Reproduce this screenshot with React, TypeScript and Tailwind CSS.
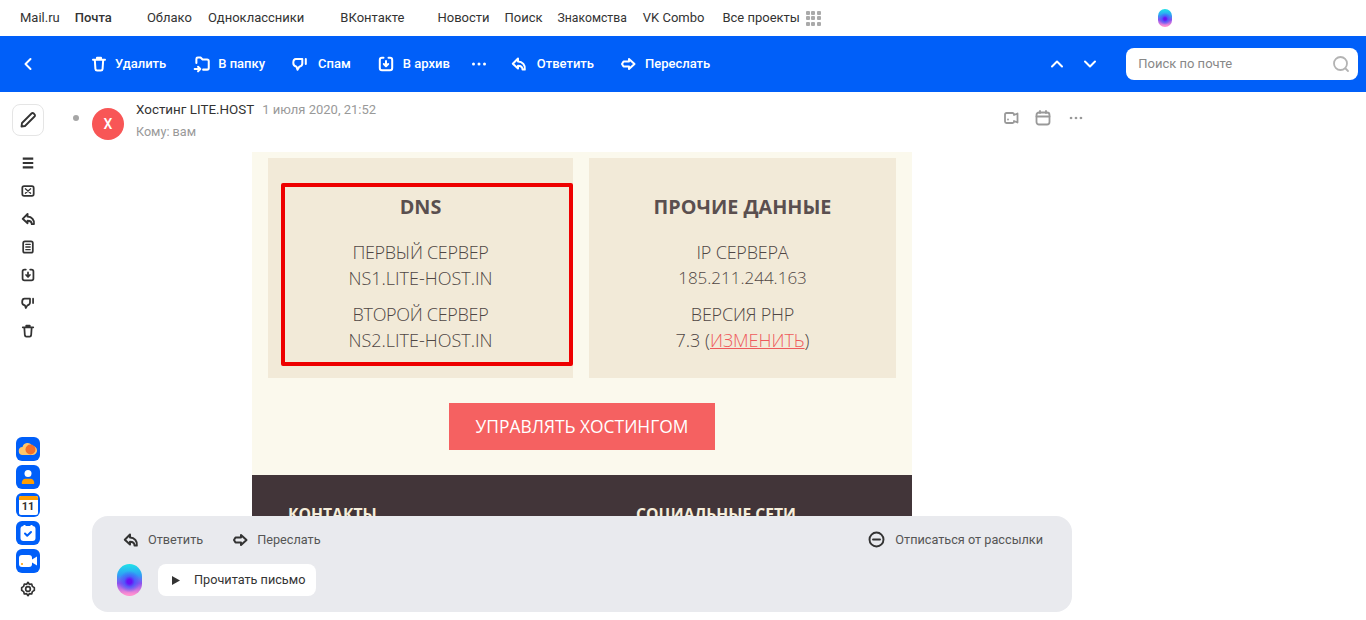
import type { ReactNode } from 'react'

const ui = { fontFamily: 'Roboto, "Liberation Sans", sans-serif' }

type IconProps = { className?: string; size?: number }

function Svg({ size = 16, className = '', children }: IconProps & { children: ReactNode }) {
  return (
    <svg
      width={size}
      height={size}
      viewBox="0 0 16 16"
      fill="none"
      stroke="currentColor"
      strokeWidth="2"
      strokeLinecap="round"
      strokeLinejoin="round"
      className={`shrink-0 ${className}`}
    >
      {children}
    </svg>
  )
}

const ReplyIcon = ({ className = '', size = 16 }: IconProps) => (
  <Svg size={size} className={className}>
    <path d="M7 2.500 1.800 7.800 7 12.500V9.800c2.500 0 4.500.7 4.500 3.700h2.300C14.500 9 11.500 5.500 7 5.500z" />
  </Svg>
)
const ForwardIcon = ({ className = '', size = 16 }: IconProps) => (
  <Svg size={size} className={className}>
    <path d="M9 3l5.500 5L9 13v-2.500H3.500L2 8l1.500-2.500H9z" />
  </Svg>
)
const TrashIcon = ({ className = '', size = 16 }: IconProps) => (
  <Svg size={size} className={className}>
    <path d="M2 3.800h12M6 3.800V1.800h4v2M3.800 3.800l.6 9c.1 1 .7 1.700 1.700 1.700h3.800c1 0 1.600-.7 1.700-1.700l.6-9" />
  </Svg>
)
const FolderIcon = ({ className = '', size = 18 }: IconProps) => (
  <Svg size={size} className={className}>
    <path d="M3 7V3.500c0-.8.5-1.300 1.300-1.300h2.400L8.500 4h4c1 0 1.500.5 1.500 1.500v6c0 1-.5 1.500-1.500 1.500H9M1.500 12.500h4.500M4.500 10.500l2 2-2 2" strokeWidth="1.800" />
  </Svg>
)
const SpamIcon = ({ className = '', size = 16 }: IconProps) => (
  <Svg size={size} className={className}>
    <path d="M4 3h6.300v4.500c0 1.800-1.300 2.800-3 3.200L5.500 13.800 4.500 10.700C2.500 10.200 1.300 8.800 1.300 7c0-2.500 1.200-4 2.700-4zM13.800 3v5" />
  </Svg>
)
const ArchiveIcon = ({ className = '', size = 16 }: IconProps) => (
  <Svg size={size} className={className}>
    <path d="M5.500 1.800H4C2.700 1.800 1.800 2.700 1.800 4v8c0 1.300.9 2.200 2.200 2.200h8c1.300 0 2.200-.9 2.200-2.200V4c0-1.300-.9-2.200-2.200-2.200h-1.500" />
    <path d="M8 5v5M5.800 8 8 10.300 10.200 8" />
  </Svg>
)
const DotsIcon = ({ className = '' }: { className?: string }) => (
  <svg width="16" height="4" viewBox="0 0 16 4" fill="currentColor" className={`shrink-0 ${className}`}>
    <circle cx="2.500" cy="2" r="1.500" />
    <circle cx="8" cy="2" r="1.500" />
    <circle cx="13.500" cy="2" r="1.500" />
  </svg>
)

function ToolItem({ icon, label, className = '', labelClass = 'ml-[10px]' }: { icon: ReactNode; label: string; className?: string; labelClass?: string }) {
  return (
    <div className={`flex items-center whitespace-nowrap ${className}`}>
      {icon}
      <span className={`text-[13px] font-medium text-white ${labelClass}`}>{label}</span>
    </div>
  )
}

function TopNav() {
  return (
    <div className="flex h-9 items-center whitespace-nowrap pl-5 text-[13px] text-[#333]">
      <span>Mail.ru</span>
      <span className="ml-[15px] font-medium">Почта</span>
      <span className="ml-[35px]">Облако</span>
      <span className="ml-4">Одноклассники</span>
      <span className="ml-9">ВКонтакте</span>
      <span className="ml-[33px]">Новости</span>
      <span className="ml-[15px]">Поиск</span>
      <span className="ml-[15px] text-[12.200px]">Знакомства</span>
      <span className="ml-4">VK Combo</span>
      <span className="ml-[18px]">Все проекты</span>
      <div className="ml-[6px] grid grid-cols-3 gap-[1.500px]">
        {Array.from({ length: 9 }).map((_, i) => (
          <div key={i} className="h-[4px] w-[4px] rounded-[1px] bg-[#aaa]" />
        ))}
      </div>
      <div className="ml-[337px] h-[18px] w-[14px] rounded-full bg-[radial-gradient(circle_at_50%_55%,#6a10f5_10%,rgba(70,90,250,0.8)_25%,transparent_50%),linear-gradient(180deg,#1fe3e8,#2f9ff5_35%,#8a50f0_60%,#ff8fd0_95%)]" />
    </div>
  )
}

function Toolbar() {
  return (
    <div className="flex h-14 items-center bg-[#005ff9] text-white">
      <svg width="10" height="14" viewBox="0 0 10 14" fill="none" stroke="currentColor" strokeWidth="2" strokeLinecap="round" strokeLinejoin="round" className="ml-[23px] shrink-0">
        <path d="M7.500 2 2.500 7l5 5" />
      </svg>
      <ToolItem className="ml-[58px]" labelClass="ml-2" icon={<TrashIcon />} label="Удалить" />
      <ToolItem className="ml-[27px]" labelClass="ml-[7px]" icon={<FolderIcon />} label="В папку" />
      <ToolItem className="ml-[27px]" icon={<SpamIcon />} label="Спам" />
      <ToolItem className="ml-[27px]" labelClass="ml-[9px]" icon={<ArchiveIcon />} label="В архив" />
      <DotsIcon className="ml-[21px]" />
      <ToolItem className="ml-6" icon={<ReplyIcon />} label="Ответить" />
      <ToolItem className="ml-[26px]" labelClass="ml-[9px]" icon={<ForwardIcon />} label="Переслать" />
      <svg width="16" height="10" viewBox="0 0 16 10" fill="none" stroke="currentColor" strokeWidth="2" strokeLinecap="round" strokeLinejoin="round" className="ml-[339px] shrink-0">
        <path d="m3 7.500 5-5 5 5" />
      </svg>
      <svg width="16" height="10" viewBox="0 0 16 10" fill="none" stroke="currentColor" strokeWidth="2" strokeLinecap="round" strokeLinejoin="round" className="ml-[17px] shrink-0">
        <path d="m3 2.500 5 5 5-5" />
      </svg>
      <div className="ml-[28px] flex h-8 w-[232px] shrink-0 items-center justify-between rounded-lg bg-white pl-3 pr-[8px]">
        <span className="text-[13px] text-[#888]">Поиск по почте</span>
        <svg width="18" height="18" viewBox="0 0 18 18" fill="none" stroke="#b3b3b3" strokeWidth="1.800" strokeLinecap="round">
          <circle cx="8.500" cy="8.500" r="6.500" />
          <path d="m13.500 13.500 2.500 2.500" />
        </svg>
      </div>
    </div>
  )
}

function AppTile({ children }: { children: ReactNode }) {
  return <div className="flex h-6 w-6 items-center justify-center rounded-md bg-[#005ff9]">{children}</div>
}

function Sidebar() {
  return (
    <div className="flex w-14 shrink-0 flex-col items-center pb-[23px] pt-3 text-[#333]">
      <div className="flex h-8 w-8 items-center justify-center rounded-lg border border-[#e5e5e5]">
        <svg width="18" height="18" viewBox="0 0 18 18" fill="none" stroke="currentColor" strokeWidth="1.800" strokeLinejoin="round">
          <path d="M2.500 15.500 3 12 12.500 2.500c.7-.7 1.500-.7 2.200 0l.8.8c.7.7.7 1.500 0 2.200L6 15z" />
        </svg>
      </div>
      <div className="mt-[15px] flex flex-col items-center gap-[4px] [&>svg]:h-[24px]">
        <Svg size={14}>
          <path d="M2 3h12M2 8h12M2 13h12" strokeWidth="2.300" strokeLinecap="butt" />
        </Svg>
        <Svg size={14}>
          <rect x="1.500" y="2.500" width="13" height="11" rx="2" />
          <path d="m5 5.500 6 5M11 5.500l-6 5" strokeWidth="1.500" />
        </Svg>
        <ReplyIcon size={15} />
        <Svg size={14}>
          <rect x="2.500" y="1.500" width="11" height="13" rx="2" />
          <path d="M5.500 5h5M5.500 8h5M5.500 11h5" strokeWidth="1.500" />
        </Svg>
        <ArchiveIcon size={14} />
        <SpamIcon size={14} />
        <TrashIcon size={14} />
      </div>
      <div className="mt-auto flex flex-col gap-1">
        <AppTile>
          <svg width="20" height="14" viewBox="0 0 20 14">
            <path d="M5 13a4 4 0 0 1-.5-8A5 5 0 0 1 14 4a4.500 4.500 0 0 1 1 9z" fill="#ffc76b" />
            <circle cx="12.500" cy="7.500" r="5" fill="#f4702b" />
          </svg>
        </AppTile>
        <AppTile>
          <svg width="14" height="16" viewBox="0 0 16 18">
            <circle cx="8" cy="5" r="4" fill="#fff" />
            <path d="M1 17v-2c0-2 2-4 4-4h6c2 0 4 2 4 4v2z" fill="#ff9e00" />
          </svg>
        </AppTile>
        <AppTile>
          <div className="flex h-[19px] w-[19px] flex-col overflow-hidden rounded-[2px] bg-white">
            <div className="h-[4px] shrink-0 bg-[#ff9e00]" />
            <span className="text-center text-[11px] font-bold leading-[14px] text-[#333]">11</span>
          </div>
        </AppTile>
        <AppTile>
          <svg width="18" height="18" viewBox="0 0 18 18">
            <rect x="1.500" y="2" width="15" height="15" rx="3" fill="#fff" />
            <path d="M5.500 1v3M12.500 1v3" stroke="#fff" strokeWidth="2" />
            <path d="m6 9.500 2.200 2.200L12 8" fill="none" stroke="#005ff9" strokeWidth="2" strokeLinecap="round" strokeLinejoin="round" />
          </svg>
        </AppTile>
        <AppTile>
          <svg width="20" height="14" viewBox="0 0 20 14">
            <rect x="1" y="1" width="13" height="12" rx="3" fill="#fff" />
            <path d="m14 5.500 5-3v9l-5-3z" fill="#fff" />
            <circle cx="4" cy="10" r="1" fill="#ff9e00" />
          </svg>
        </AppTile>
        <div className="mt-[4px] flex justify-center">
          <svg width="16" height="16" viewBox="0 0 24 24" fill="none" stroke="currentColor" strokeWidth="2.500" strokeLinejoin="round">
            <path d="m12 2 2 3 3.500-.5 1 3.500 3 2v4l-3 2-1 3.500-3.500-.5-2 3-2-3-3.500.5-1-3.500-3-2v-4l3-2 1-3.500 3.500.5z" />
            <circle cx="12" cy="12" r="3.500" />
          </svg>
        </div>
      </div>
    </div>
  )
}

function MessageHeader() {
  return (
    <div className="flex h-[60px] items-start text-[#999]">
      <div className="ml-[17px] mt-[23px] h-[6px] w-[6px] rounded-full bg-[#a6a6a6]" />
      <div className="ml-[13px] mt-4 flex h-8 w-8 shrink-0 items-center justify-center rounded-full bg-[#f85656] text-[14px] font-medium text-white">X</div>
      <div className="ml-3 mt-[10px] whitespace-nowrap text-[13px] leading-[16px]">
        <div>
          <span className="text-[13.400px] text-[#333]">Хостинг LITE.HOST</span>
          <span className="ml-2">1 июля 2020, 21:52</span>
        </div>
        <div className="mt-[6px] text-[12.600px]">Кому: вам</div>
      </div>
      <div className="ml-[627px] mt-[18px] flex items-center gap-4 text-[#999]">
        <Svg size={16}>
          <path d="M11 5V4.500c0-1-.7-1.500-1.500-1.500h-6C2.500 3 2 3.500 2 4.500v7C2 12.500 2.500 13 3.500 13h6c.8 0 1.500-.5 1.500-1.500V11l3.500 1.500v-9zM5 9.500v.1" strokeWidth="1.800" />
        </Svg>
        <Svg size={16}>
          <rect x="1.500" y="2.500" width="13" height="12" rx="2.500" strokeWidth="1.800" />
          <path d="M1.500 6.500h13M5 1v2M11 1v2" strokeWidth="1.800" />
        </Svg>
        <DotsIcon className="ml-[1px] scale-90" />
      </div>
    </div>
  )
}

function InfoCard({ title, children, className = '' }: { title: string; children: ReactNode; className?: string }) {
  return (
    <div className={`h-[220px] bg-[#f2ead8] pt-[34px] text-center text-[18px] font-light leading-[26px] text-[#4f4644] ${className}`}>
      <div className="text-[19.800px] font-bold leading-[30px] text-[#5a4f4f]">{title}</div>
      {children}
    </div>
  )
}

function EmailBody() {
  return (
    <div className="ml-[196px] w-[660px] bg-[#fbf9ed]" style={{ fontFamily: '"Open Sans", "Liberation Sans", sans-serif' }}>
      <div className="relative flex pl-4 pt-[6px]">
        <InfoCard title="DNS" className="w-[305px]">
          <div className="mt-[17px] tracking-[-0.3px]">ПЕРВЫЙ СЕРВЕР</div>
          <div>NS1.LITE-HOST.IN</div>
          <div className="mt-[10px] tracking-[-0.3px]">ВТОРОЙ СЕРВЕР</div>
          <div>NS2.LITE-HOST.IN</div>
        </InfoCard>
        <InfoCard title="ПРОЧИЕ ДАННЫЕ" className="ml-4 w-[307px]">
          <div className="mt-[17px] tracking-[-0.2px]">IP СЕРВЕРА</div>
          <div className="text-[17px]">185.211.244.163</div>
          <div className="mt-[10px] tracking-[-0.2px]">ВЕРСИЯ PHP</div>
          <div>
            7.3 (<span className="text-[#ee5a5c] underline">ИЗМЕНИТЬ</span>)
          </div>
        </InfoCard>
        <div className="absolute left-[29px] top-[31px] h-[183px] w-[292px] rounded-[2px] border-4 border-[#ee0000]" />
      </div>
      <div className="flex justify-center pt-[25px]">
        <div className="flex h-[47px] w-[266px] items-center justify-center bg-[#f56161] text-[17.400px] text-white">УПРАВЛЯТЬ ХОСТИНГОМ</div>
      </div>
      <div className="mt-[25px] flex h-[100px] bg-[#423539] pl-9 pt-[28px] text-[15.700px] font-bold text-[#f5eedb]">
        <span className="w-[348px]">КОНТАКТЫ</span>
        <span>СОЦИАЛЬНЫЕ СЕТИ</span>
      </div>
    </div>
  )
}

function QuickBar() {
  return (
    <div className="absolute bottom-2 left-[92px] h-24 w-[980px] rounded-2xl bg-[#e9eaee] text-[12.700px] text-[#555]">
      <div className="flex h-12 items-center pl-[31px] pr-[29px]">
        <ReplyIcon className="text-[#333]" />
        <span className="ml-[9px]">Ответить</span>
        <ForwardIcon className="ml-[29px] text-[#333]" />
        <span className="ml-[9px]">Переслать</span>
        <div className="ml-auto flex items-center">
          <svg width="17" height="17" viewBox="0 0 17 17" fill="none" stroke="#333" strokeWidth="1.900" strokeLinecap="round">
            <circle cx="8.500" cy="8.500" r="7" />
            <path d="M5 8.500h7" />
          </svg>
          <span className="ml-[10px]">Отписаться от рассылки</span>
        </div>
      </div>
      <div className="flex items-center pl-[25px]">
        <div className="h-8 w-[25px] rounded-full bg-[radial-gradient(circle_at_50%_55%,#6a10f5_10%,rgba(70,90,250,0.8)_25%,transparent_50%),linear-gradient(180deg,#1fe3e8,#2f9ff5_35%,#8a50f0_60%,#ff8fd0_95%)]" />
        <div className="ml-4 flex h-8 w-[158px] items-center rounded-lg bg-white pl-[14px] text-[#333]">
          <svg width="8" height="9" viewBox="0 0 8 9" fill="#333">
            <path d="M0 0v9l8-4.500z" />
          </svg>
          <span className="ml-[14px]">Прочитать письмо</span>
        </div>
      </div>
    </div>
  )
}

export default function App() {
  return (
    <div className="h-[620px] w-[1366px] overflow-hidden bg-white" style={ui}>
      <TopNav />
      <Toolbar />
      <div className="relative flex h-[528px] overflow-hidden">
        <Sidebar />
        <div className="flex-1">
          <MessageHeader />
          <EmailBody />
        </div>
        <QuickBar />
      </div>
    </div>
  )
}
